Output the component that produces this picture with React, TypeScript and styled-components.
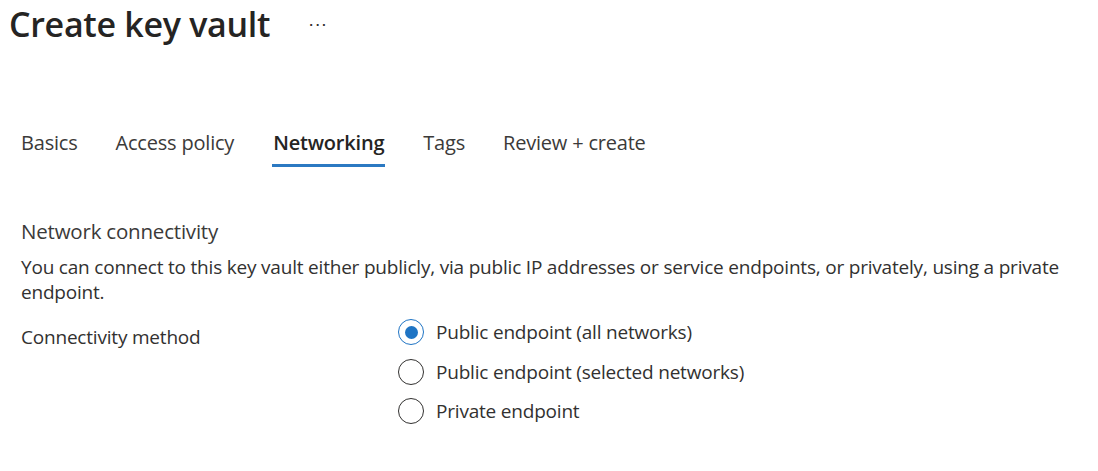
import React, { useState } from "react";
import styled, { createGlobalStyle } from "styled-components";

const Global = createGlobalStyle`
  html, body { margin: 0; padding: 0; background: #ffffff; }
  body { font-family: "Open Sans", "Noto Sans", sans-serif; color: #323130; }
`;

const Page = styled.div`
  width: 1098px;
  height: 471px;
  overflow: hidden;
  box-sizing: border-box;
`;

const Header = styled.div`
  display: flex;
  align-items: center;
  gap: 38px;
  padding: 1px 0 0 9px;
  height: 46px;
`;

const Title = styled.h1`
  margin: 0;
  font-size: 34px;
  line-height: 46px;
  font-weight: 600;
  color: #252423;
  letter-spacing: -0.3px;
`;

const MoreButton = styled.button`
  border: none;
  background: none;
  padding: 0;
  font-size: 19px;
  color: #323130;
  cursor: pointer;
  line-height: 1;
  margin-top: -2px;
`;

const Tabs = styled.div`
  display: flex;
  gap: 38px;
  padding: 0 0 0 21px;
  margin-top: 83px;
`;

const Tab = styled.div<{ $active?: boolean }>`
  font-size: 20px;
  font-weight: ${(p) => (p.$active ? 600 : 400)};
  color: ${(p) => (p.$active ? "#252423" : "#3b3a39")};
  padding: 0 ${(p) => (p.$active ? "1px" : "0")} 8px;
  border-bottom: 3px solid ${(p) => (p.$active ? "#2b79c2" : "transparent")};
  line-height: 26px;
  letter-spacing: -0.2px;
`;

const Section = styled.div`
  padding: 0 0 0 21px;
  margin-top: 51px;
`;

const SectionTitle = styled.div`
  font-size: 20.5px;
  line-height: 26px;
  color: #3b3a39;
  letter-spacing: -0.2px;
`;

const Description = styled.p`
  margin: 11px 0 0;
  font-size: 19px;
  line-height: 25px;
  width: 1050px;
  color: #323130;
  letter-spacing: -0.2px;
`;

const FieldRow = styled.div`
  display: grid;
  grid-template-columns: 377px 1fr;
  margin-top: 14px;
`;

const FieldLabel = styled.div`
  font-size: 19px;
  line-height: 25px;
  padding-top: 6px;
  color: #323130;
  letter-spacing: -0.2px;
`;

const RadioGroup = styled.div`
  display: flex;
  flex-direction: column;
  gap: 13.5px;
`;

const RadioOption = styled.label`
  display: flex;
  align-items: center;
  gap: 12px;
  cursor: pointer;
  font-size: 19px;
  line-height: 26px;
  color: #323130;
  letter-spacing: -0.2px;
`;

const RadioCircle = styled.span<{ $checked?: boolean }>`
  width: 26px;
  height: 26px;
  box-sizing: border-box;
  border-radius: 50%;
  border: 1.5px solid ${(p) => (p.$checked ? "#1f74c4" : "#323130")};
  display: flex;
  align-items: center;
  justify-content: center;
  flex-shrink: 0;
  &::after {
    content: "";
    width: 13px;
    height: 13px;
    border-radius: 50%;
    background: #1f74c4;
    display: ${(p) => (p.$checked ? "block" : "none")};
  }
`;

const tabs = ["Basics", "Access policy", "Networking", "Tags", "Review + create"];
const options = [
  "Public endpoint (all networks)",
  "Public endpoint (selected networks)",
  "Private endpoint",
];

export default function App() {
  const [selected, setSelected] = useState(0);
  return (
    <Page>
      <Global />
      <Header>
        <Title>Create key vault</Title>
        <MoreButton aria-label="More">···</MoreButton>
      </Header>
      <Tabs>
        {tabs.map((t) => (
          <Tab key={t} $active={t === "Networking"}>
            {t}
          </Tab>
        ))}
      </Tabs>
      <Section>
        <SectionTitle>Network connectivity</SectionTitle>
        <Description>
          You can connect to this key vault either publicly, via public IP addresses or service
          endpoints, or privately, using a private endpoint.
        </Description>
        <FieldRow>
          <FieldLabel>Connectivity method</FieldLabel>
          <RadioGroup>
            {options.map((o, i) => (
              <RadioOption key={o} onClick={() => setSelected(i)}>
                <RadioCircle $checked={selected === i} />
                {o}
              </RadioOption>
            ))}
          </RadioGroup>
        </FieldRow>
      </Section>
    </Page>
  );
}
